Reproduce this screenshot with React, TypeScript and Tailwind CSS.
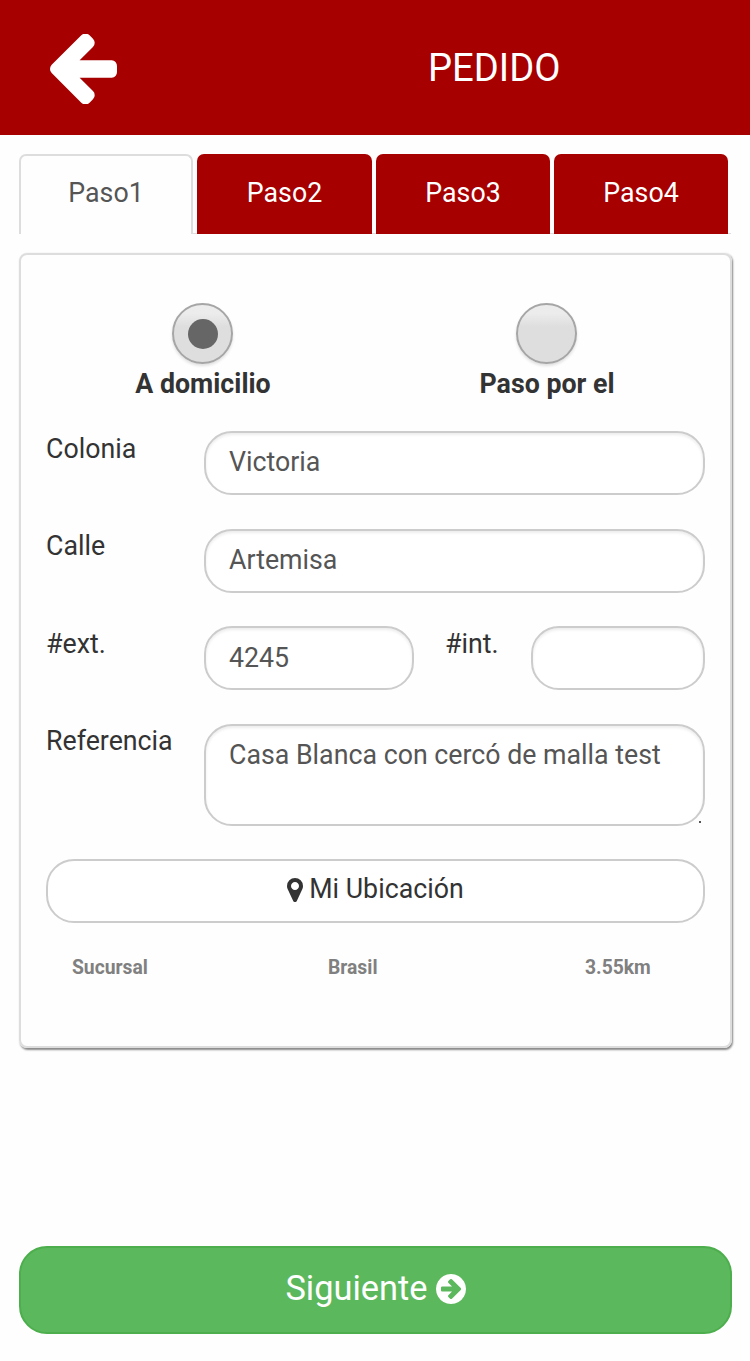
import type { ReactNode } from "react";

function ArrowLeft() {
  return (
    <svg viewBox="192 190 1472 1540" preserveAspectRatio="none" className="mt-[3px] h-[70px] w-[67px] fill-white">
      <path d="M1664 896v128q0 53-32.5 90.5t-84.5 37.5h-704l293 294q38 36 38 90t-38 90l-75 76q-37 37-90 37-52 0-91-37l-651-652q-37-37-37-90 0-52 37-91l651-650q38-38 91-38 52 0 90 38l75 74q38 38 38 91t-38 91l-293 293h704q52 0 84.5 37.5t32.5 90.5z" />
    </svg>
  );
}

function MapMarker() {
  return (
    <svg viewBox="384 128 1024 1536" className="h-6 w-4 fill-[#333]">
      <path d="M1152 640q0-106-75-181t-181-75-181 75-75 181 75 181 181 75 181-75 75-181zm256 0q0 109-33 179l-364 774q-16 33-47.5 52t-67.5 19-67.5-19-46.5-52l-365-774q-33-70-33-179 0-212 150-362t362-150 362 150 150 362z" />
    </svg>
  );
}

function ArrowCircleRight() {
  return (
    <svg viewBox="128 128 1536 1536" className="h-[30px] w-[30px] fill-white">
      <path d="M1413 896q0-27-18-45l-91-91-362-362q-18-18-45-18t-45 18l-91 91q-18 18-18 45t18 45l189 189h-502q-26 0-45 19t-19 45v128q0 26 19 45t45 19h502l-189 189q-19 19-19 45t19 45l91 91q18 18 45 18t45-18l362-362 91-91q18-18 18-45zm251 0q0 209-103 385.5t-279.5 279.5-385.5 103-385.5-103-279.5-279.5-103-385.5 103-385.5 279.5-279.5 385.5-103 385.5 103 279.5 279.5 103 385.5z" />
    </svg>
  );
}

function Radio({ label, checked }: { label: string; checked?: boolean }) {
  return (
    <div className="flex w-[344px] shrink-0 flex-col items-center">
      <span className="flex h-[61px] w-[61px] items-center justify-center rounded-full border-2 border-[#a6a6a6] bg-linear-to-b from-[#ececec] from-15% to-[#dedede] to-38% shadow-[0_2px_3px_rgba(0,0,0,0.12)]">
        {checked && <span className="h-[30px] w-[30px] rounded-full bg-[#666]" />}
      </span>
      <span className="mt-1 pl-px text-[26.75px] leading-8 font-bold">{label}</span>
    </div>
  );
}

function Label({ className, children }: { className: string; children: ReactNode }) {
  return <label className={`pt-[1.5px] text-[26.75px] leading-8 ${className}`}>{children}</label>;
}

const field =
  "rounded-[28px] border-2 border-[#ccc] bg-white px-[23px] text-[26.75px] text-[#555] outline-none shadow-[inset_0_2px_3px_rgba(0,0,0,0.075)]";

export default function App() {
  return (
    <div className="flex h-[1361px] w-[750px] flex-col bg-[#fefefe] font-[Roboto,sans-serif] text-[#333]">
      <header className="flex h-[135px] shrink-0 items-center bg-[#a60000] pl-[50px]">
        <ArrowLeft />
        <h1 className="mt-[2px] ml-[311px] text-[38.2px] leading-none font-normal text-white">PEDIDO</h1>
      </header>

      <nav className="mt-[19px] ml-[19px] flex h-[80px] w-[712px] shrink-0 gap-1 text-[26.75px] shadow-[inset_0_-1px_0_#ddd]">
        <div className="flex w-[174px] justify-center rounded-t-[7px] border-2 border-b-0 border-[#ddd] bg-[#fefefe] pt-[17px] leading-10 text-[#555]">
          Paso1
        </div>
        <div className="flex w-[175px] justify-center rounded-t-[7px] bg-[#a60000] pt-[19px] leading-10 text-white">Paso2</div>
        <div className="flex w-[174px] justify-center rounded-t-[7px] bg-[#a60000] pt-[19px] leading-10 text-white">Paso3</div>
        <div className="flex w-[174px] justify-center rounded-t-[7px] bg-[#a60000] pt-[19px] leading-10 text-white">Paso4</div>
      </nav>

      <main className="mt-[19px] ml-[19px] h-[795px] w-[713px] shrink-0 rounded-[8px] border-2 border-[#ddd] px-[25px] pt-12 shadow-[1px_1.5px_2px_#888]">
        <div className="-ml-[15.5px] flex">
          <Radio label="A domicilio" checked />
          <Radio label="Paso por el" />
        </div>

        <div className="mt-[31px] flex flex-col gap-[33.5px]">
          <div className="flex h-16">
            <Label className="w-[158px]">Colonia</Label>
            <input className={`w-[501px] pb-[2px] ${field}`} defaultValue="Victoria" />
          </div>
          <div className="flex h-16">
            <Label className="w-[158px]">Calle</Label>
            <input className={`w-[501px] pb-px ${field}`} defaultValue="Artemisa" />
          </div>
          <div className="flex h-16">
            <Label className="w-[158px]">#ext.</Label>
            <input className={`w-[210px] ${field}`} defaultValue="4245" />
            <Label className="ml-[31px] w-[86px]">#int.</Label>
            <input className={`w-[174px] ${field}`} />
          </div>
          <div className="flex h-[102px]">
            <Label className="w-[158px]">Referencia</Label>
            <div className="relative flex w-[501px]">
              <textarea
                className={`w-full resize-none overflow-hidden pt-[10px] leading-[39px] ${field}`}
                defaultValue="Casa Blanca con cercó de malla test"
              />
              <span className="absolute right-[4px] bottom-[3px] h-[2px] w-[2px] bg-[#555]" />
            </div>
          </div>
          <button className="flex h-16 w-[659px] items-center justify-center gap-[6px] rounded-[28px] border-2 border-[#ccc] bg-white pb-[3px] text-[26.75px]">
            <MapMarker />
            Mi Ubicación
          </button>
        </div>

        <div className="mt-[33px] flex text-[19.3px] leading-6 font-bold text-[#808080]">
          <span className="w-[256px] pl-[26px]">Sucursal</span>
          <span className="w-[257px] pl-[26px]">Brasil</span>
          <span className="pl-[26px]">3.55km</span>
        </div>
      </main>

      <button className="mt-[198px] ml-[19px] flex h-[88px] w-[713px] shrink-0 items-center justify-center gap-2 rounded-[28px] border-2 border-[#4cae4c] bg-[#5cb85c] pb-[3px] text-[34.4px] text-white">
        Siguiente
        <ArrowCircleRight />
      </button>
    </div>
  );
}
